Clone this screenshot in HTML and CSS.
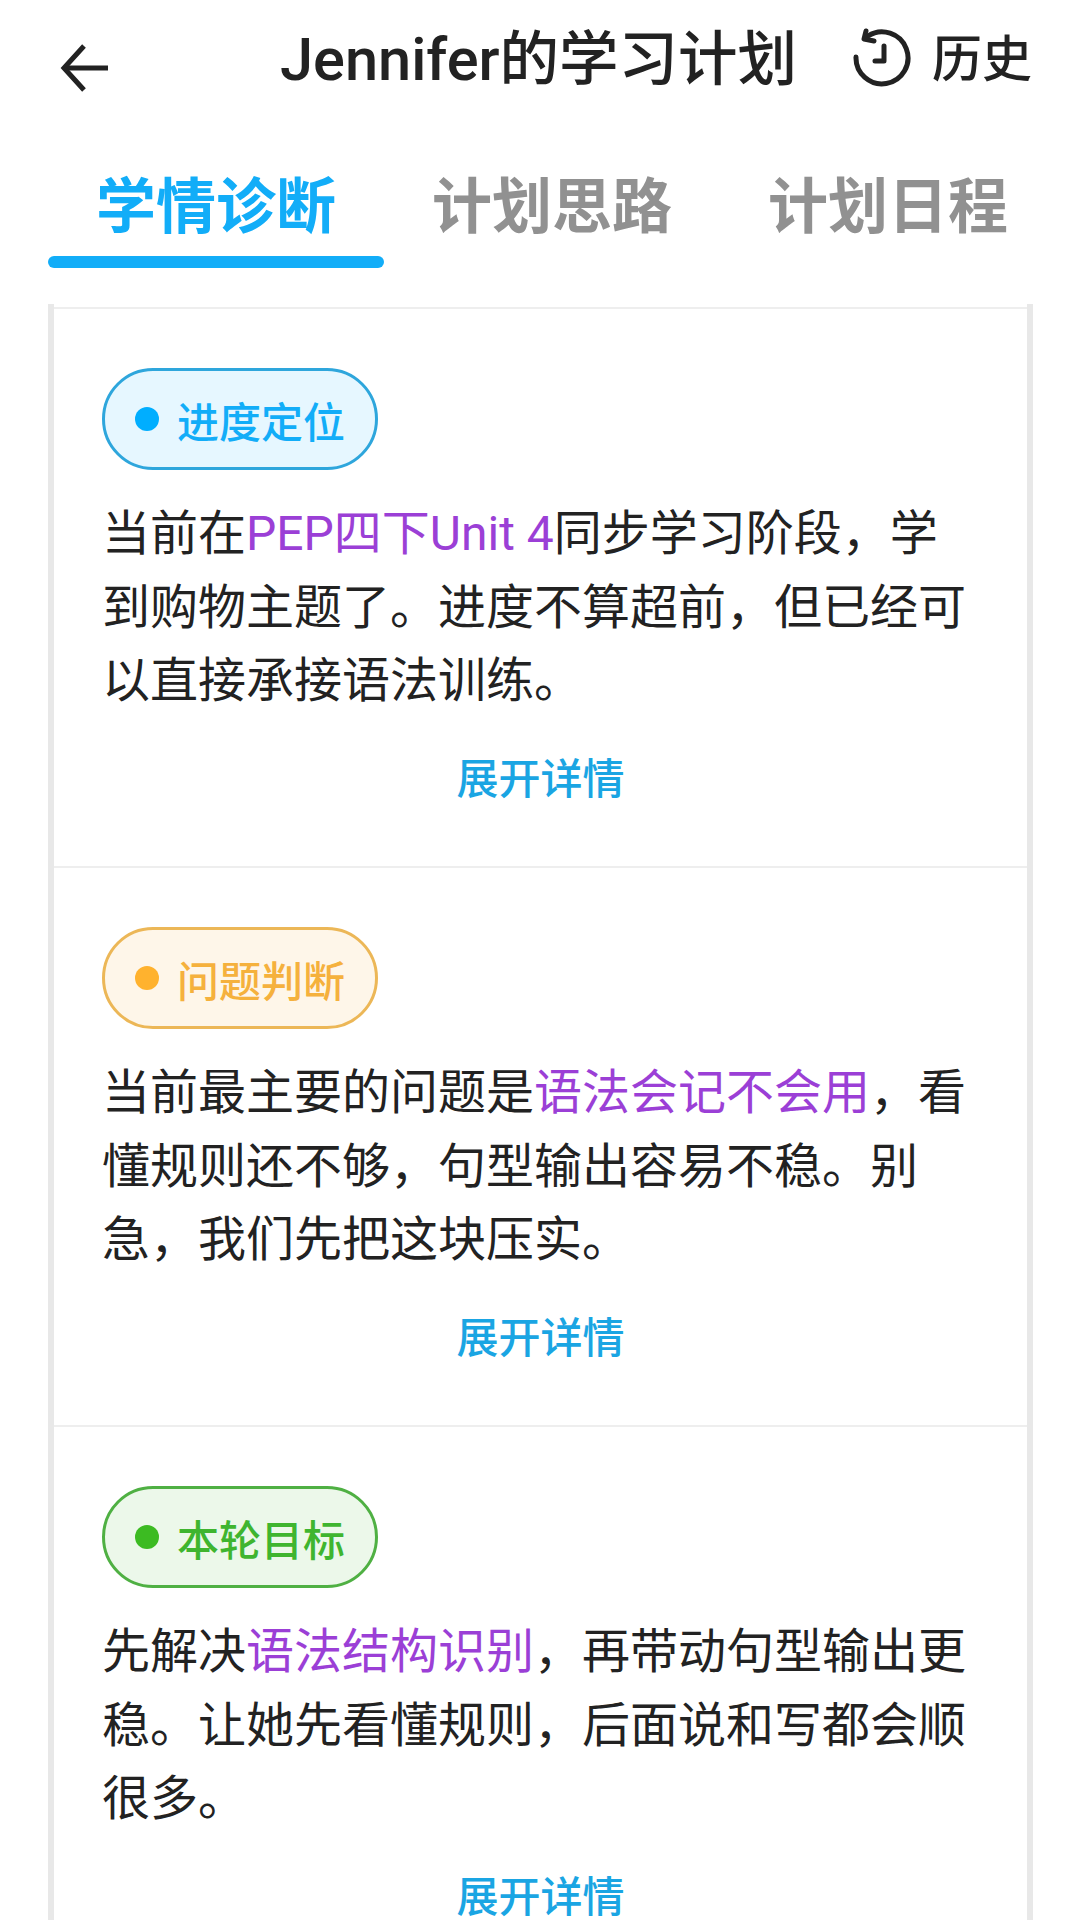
FILE: index.html
```html
<!DOCTYPE html>
<html lang="zh-CN">
<head>
    <meta charset="UTF-8">
    <meta name="viewport" content="width=device-width, initial-scale=1.0">
    <title>Jennifer的学习计划</title>
    <link rel="stylesheet" href="styles.css">
</head>
<body>

<header class="topbar">
    <svg class="back-icon" viewBox="0 0 48 48" fill="none" stroke="#222" stroke-width="5">
        <path d="M47 24H4"/>
        <path d="M23 2L3 24L23 46"/>
    </svg>
    <h1 class="title">Jennifer的学习计划</h1>
    <div class="history">
        <svg class="history-icon" viewBox="0 0 60 60" fill="none" stroke="#222" stroke-width="5" stroke-linecap="round" stroke-linejoin="round">
            <path d="M4 29A26 26 0 1 0 16 8"/>
            <path d="M14 3L12 11L22 13"/>
            <path d="M32 18V33H23"/>
        </svg>
        <span>历史</span>
    </div>
</header>

<nav class="tabs">
    <div class="tab active">学情诊断</div>
    <div class="tab">计划思路</div>
    <div class="tab">计划日程</div>
</nav>

<main class="list">
    <section class="card">
        <div class="badge blue"><i class="dot"></i>进度定位</div>
        <p class="text">当前在<em>PEP四下Unit 4</em>同步学习阶段，学到购物主题了。进度不算超前，但已经可以直接承接语法训练。</p>
        <div class="more">展开详情</div>
    </section>
    <section class="card">
        <div class="badge orange"><i class="dot"></i>问题判断</div>
        <p class="text">当前最主要的问题是<em>语法会记不会用</em>，看懂规则还不够，句型输出容易不稳。别急，我们先把这块压实。</p>
        <div class="more">展开详情</div>
    </section>
    <section class="card">
        <div class="badge green"><i class="dot"></i>本轮目标</div>
        <p class="text">先解决<em>语法结构识别</em>，再带动句型输出更稳。让她先看懂规则，后面说和写都会顺很多。</p>
        <div class="more">展开详情</div>
    </section>
</main>

</body>
</html>
```

FILE: styles.css
```css
* {
    box-sizing: border-box;
}
html, body {
    height: 1920px;
    overflow: hidden;
}
body {
    margin: 0;
    background-color: #fff;
    color: #222;
    font-family: Roboto, "Noto Sans CJK SC", sans-serif;
}
.topbar {
    display: flex;
    align-items: center;
    height: 116px;
    padding: 0 48px 8px 60px;
}
.back-icon {
    width: 50px;
    height: 48px;
    margin-top: 28px;
}
.title {
    margin: 0 0 0 170px;
    font-size: 59.5px;
    font-weight: 500;
    white-space: nowrap;
}
.history {
    display: flex;
    align-items: center;
    margin-left: auto;
    padding-top: 2px;
    font-size: 50px;
    font-weight: 500;
}
.history-icon {
    width: 60px;
    height: 60px;
    margin-top: 6px;
    margin-right: 20px;
}
.tabs {
    display: flex;
    padding: 0 24px 0 48px;
    height: 188px;
}
.tab {
    position: relative;
    width: 336px;
    padding-top: 50px;
    text-align: center;
    font-size: 60px;
    line-height: 84px;
    font-weight: 700;
    color: #919191;
}
.tab.active {
    color: #12adf8;
}
.tab.active::after {
    content: "";
    position: absolute;
    left: 0;
    right: 0;
    top: 140px;
    height: 12px;
    border-radius: 6px;
    background-color: #12adf8;
}
.list {
    margin: 0 47px 0 48px;
    padding-top: 3px;
    border-left: 6px solid #e8e8e8;
    border-right: 6px solid #e8e8e8;
}
.card {
    height: 559px;
    padding: 59px 48px 0 48px;
    border-top: 2px solid #eeeeee;
}
.badge {
    display: flex;
    align-items: center;
    width: 276px;
    height: 102px;
    padding-left: 30px;
    border: 3px solid;
    border-radius: 51px;
    font-size: 42px;
    font-weight: 500;
}
.dot {
    width: 24px;
    height: 24px;
    margin-right: 18px;
    border-radius: 50%;
}
.blue {
    color: #12adf8;
    border-color: #2ea6dc;
    background-color: #e6f7ff;
}
.blue .dot {
    background-color: #00aeff;
}
.orange {
    color: #f5b13d;
    border-color: #ecb757;
    background-color: #fef6e9;
}
.orange .dot {
    background-color: #ffb22e;
}
.green {
    color: #3fb52f;
    border-color: #4fb043;
    background-color: #ecf8ea;
}
.green .dot {
    background-color: #3cbb22;
}
.text {
    margin: 27px 0 0;
    font-size: 48px;
    line-height: 73.5px;
}
.text em {
    font-style: normal;
    color: #9b3fd6;
}
.more {
    margin-top: 30px;
    text-align: center;
    font-size: 42px;
    line-height: 64px;
    font-weight: 500;
    color: #1aa5e3;
}
```
